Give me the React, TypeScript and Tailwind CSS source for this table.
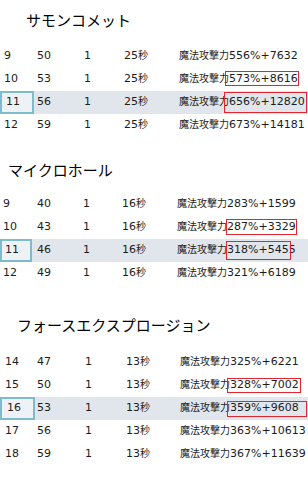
type Row = {
  lv: string;
  need: string;
  cost: string;
  cd: string;
  pre: string;
  val: string;
  active?: boolean;
  box?: { top: number; left: number; w: number; h: number };
};

type Section = {
  title: string;
  titleX: string;
  mt: string;
  rowsMt: string;
  cols: string;
  firstPl: string;
  cellW: string;
  rows: Row[];
};

const sections: Section[] = [
  {
    title: "サモンコメット",
    titleX: "pl-[26px]",
    mt: "mt-0",
    rowsMt: "mt-[5px]",
    cols: "grid-cols-[34px_47px_40px_55px_1fr]",
    firstPl: "pl-[4px]",
    cellW: "w-[34px]",
    rows: [
      { lv: "9", need: "50", cost: "1", cd: "25", pre: "魔法攻撃力", val: "556%+7632" },
      { lv: "10", need: "53", cost: "1", cd: "25", pre: "魔法攻撃力", val: "573%+8616", box: { top: 3, left: 225, w: 74, h: 15 } },
      { lv: "11", need: "56", cost: "1", cd: "25", pre: "魔法攻撃力", val: "656%+12820", active: true, box: { top: 1, left: 224, w: 83, h: 21 } },
      { lv: "12", need: "59", cost: "1", cd: "25", pre: "魔法攻撃力", val: "673%+14181" },
    ],
  },
  {
    title: "マイクロホール",
    titleX: "pl-[8px]",
    mt: "mt-[13px]",
    rowsMt: "mt-[3px]",
    cols: "grid-cols-[34px_46px_39px_55px_1fr]",
    firstPl: "pl-[3px]",
    cellW: "w-[32px]",
    rows: [
      { lv: "9", need: "40", cost: "1", cd: "16", pre: "魔法攻撃力", val: "283%+1599" },
      { lv: "10", need: "43", cost: "1", cd: "16", pre: "魔法攻撃力", val: "287%+3329", box: { top: 3, left: 226, w: 71, h: 16 } },
      { lv: "11", need: "46", cost: "1", cd: "16", pre: "魔法攻撃力", val: "318%+5455", active: true, box: { top: 2, left: 226, w: 65, h: 19 } },
      { lv: "12", need: "49", cost: "1", cd: "16", pre: "魔法攻撃力", val: "321%+6189" },
    ],
  },
  {
    title: "フォースエクスプロージョン",
    titleX: "pl-[17px]",
    mt: "mt-[20px]",
    rowsMt: "mt-[6px]",
    cols: "grid-cols-[34px_48px_41px_54px_1fr]",
    firstPl: "pl-[5px]",
    cellW: "w-[35px]",
    rows: [
      { lv: "14", need: "47", cost: "1", cd: "13", pre: "魔法攻撃力", val: "325%+6221" },
      { lv: "15", need: "50", cost: "1", cd: "13", pre: "魔法攻撃力", val: "328%+7002", box: { top: 4, left: 227, w: 74, h: 15 } },
      { lv: "16", need: "53", cost: "1", cd: "13", pre: "魔法攻撃力", val: "359%+9608", active: true, box: { top: 4, left: 227, w: 80, h: 16 } },
      { lv: "17", need: "56", cost: "1", cd: "13", pre: "魔法攻撃力", val: "363%+10613" },
      { lv: "18", need: "59", cost: "1", cd: "13", pre: "魔法攻撃力", val: "367%+11639" },
    ],
  },
];

function SkillRow({ row, s }: { row: Row; s: Section }) {
  return (
    <div className={`relative grid ${s.cols} h-[23px] items-center ${row.active ? "bg-[#e1e6ed]" : ""}`}>
      <div
        className={`h-full flex items-center ${s.firstPl} ${
          row.active ? `${s.cellW} bg-[#eef1f5] border-2 border-[#7dbccb]` : ""
        }`}
      >
        {row.lv}
      </div>
      <div className="pl-[3px]">{row.need}</div>
      <div className="pl-[3px]">{row.cost}</div>
      <div className="pl-[3px]">
        {row.cd}
        <span className="text-[10px]">秒</span>
      </div>
      <div className="pl-[3px] whitespace-nowrap">
        <span className="text-[10px]">{row.pre}</span>
        {row.val}
      </div>
      {row.box && (
        <div
          className="absolute border border-[#e3262d]"
          style={{ top: row.box.top, left: row.box.left, width: row.box.w, height: row.box.h }}
        />
      )}
    </div>
  );
}

export default function App() {
  return (
    <div
      className="w-[308px] h-[482px] bg-white overflow-hidden text-[11px] text-[#1c1c1c]"
      style={{ fontFamily: '"DejaVu Sans", "Noto Sans CJK JP", sans-serif' }}
    >
      {sections.map((s) => (
        <div key={s.title} className={s.mt}>
          <div
            className={`h-[40px] flex items-center ${s.titleX} text-[15px] text-black`}
            style={{ fontFamily: '"Noto Sans CJK JP", sans-serif' }}
          >
            {s.title}
          </div>
          <div className={s.rowsMt}>
            {s.rows.map((r) => (
              <SkillRow key={r.lv} row={r} s={s} />
            ))}
          </div>
        </div>
      ))}
    </div>
  );
}
